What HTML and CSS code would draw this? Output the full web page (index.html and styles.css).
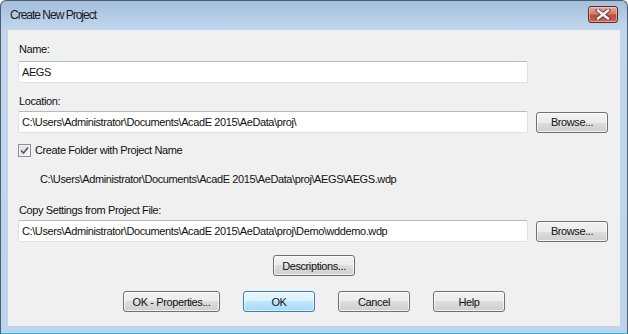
FILE: index.html
```html
<!DOCTYPE html>
<html lang="en">
<head>
    <meta charset="UTF-8">
    <title>Create New Project</title>
    <link rel="stylesheet" href="styles.css">
</head>
<body>

<div class="window">
    <div class="titlebar">
        <span class="title">Create New Project</span>
        <button class="close" type="button" aria-label="Close">
            <svg width="16" height="11" viewBox="0 0 16 11">
                <path d="M3 1.5 L13 9.5 M13 1.5 L3 9.5" stroke="#5b3b3b" stroke-width="4.2" stroke-linecap="square"/>
                <path d="M3 1.5 L13 9.5 M13 1.5 L3 9.5" stroke="#f4f4f4" stroke-width="2.4" stroke-linecap="square"/>
            </svg>
        </button>
    </div>

    <div class="client">
        <label class="label label-first" for="name">Name:</label>
        <div class="row">
            <input class="field" id="name" type="text" value="AEGS">
        </div>

        <label class="label" for="location">Location:</label>
        <div class="row">
            <input class="field" id="location" type="text" value="C:\Users\Administrator\Documents\AcadE 2015\AeData\proj\">
            <button class="btn" type="button">Browse...</button>
        </div>

        <label class="check">
            <span class="box">
                <svg width="9" height="9" viewBox="0 0 9 9">
                    <path d="M1 4.5 L3.5 7 L8 1.5" fill="none" stroke="#4a5878" stroke-width="1.6"/>
                </svg>
            </span>
            Create Folder with Project Name
        </label>
        <div class="path">C:\Users\Administrator\Documents\AcadE 2015\AeData\proj\AEGS\AEGS.wdp</div>

        <label class="label label-copy" for="settings">Copy Settings from Project File:</label>
        <div class="row">
            <input class="field" id="settings" type="text" value="C:\Users\Administrator\Documents\AcadE 2015\AeData\proj\Demo\wddemo.wdp">
            <button class="btn" type="button">Browse...</button>
        </div>

        <div class="center">
            <button class="btn btn-desc" type="button">Descriptions...</button>
        </div>

        <div class="actions">
            <button class="btn btn-wide" type="button">OK - Properties...</button>
            <button class="btn btn-default" type="button">OK</button>
            <button class="btn" type="button">Cancel</button>
            <button class="btn" type="button">Help</button>
        </div>
    </div>
</div>

</body>
</html>
```

FILE: styles.css
```css
body {
    margin: 0;
    font-family: "Liberation Sans", Arial, sans-serif;
    font-size: 11px;
    letter-spacing: -0.4px;
    color: #111;
    background: #fff;
}
.window {
    width: 628px;
    height: 334px;
    box-sizing: border-box;
    display: flex;
    flex-direction: column;
    padding: 0 7px 7px 7px;
    border: 1px solid #4f5d6c;
    border-bottom-color: #2cb6d6;
    border-radius: 6px 6px 0 0;
    background: linear-gradient(#a3bfdc, #c2d7ee 29px, #bdd4ec);
}
.titlebar {
    height: 29px;
    display: flex;
    align-items: center;
    justify-content: space-between;
}
.title {
    font-size: 12px;
    letter-spacing: -1px;
    color: #1b1b1b;
    padding: 0 0 2px 2px;
}
.close {
    width: 30px;
    height: 17px;
    padding: 0;
    margin: 0 2px 3px 0;
    border: 1px solid #5b2a2a;
    border-radius: 3px;
    background: linear-gradient(#e7aa9e, #d27c6c 45%, #c24a3a 55%, #c9654f);
    box-shadow: inset 0 0 0 1px rgba(255, 220, 210, 0.5);
    display: flex;
    align-items: center;
    justify-content: center;
}
.client {
    flex: 1;
    background: #f0f0f0;
    padding: 0 10px;
}
.label {
    display: block;
    line-height: 13px;
    margin: 12px 0 3px 1px;
}
.label-first {
    margin-top: 13px;
    margin-bottom: 5px;
}
.label-copy {
    margin-top: 18px;
}
.row {
    display: grid;
    grid-template-columns: 510px 72px;
    column-gap: 8px;
    align-items: center;
}
.field {
    height: 22px;
    box-sizing: border-box;
    margin: 0;
    padding: 0 3px;
    border: 1px solid #dde2e8;
    border-top-color: #b5bac2;
    border-radius: 2px;
    background: #fff;
    font: inherit;
    letter-spacing: inherit;
    color: #111;
}
.btn {
    height: 21px;
    width: 72px;
    box-sizing: border-box;
    padding: 0;
    border: 1px solid #707070;
    border-radius: 3px;
    background: linear-gradient(#f2f2f2, #ebebeb 50%, #dddddd 50%, #cfcfcf);
    box-shadow: inset 0 0 0 1px rgba(255, 255, 255, 0.7);
    font: inherit;
    letter-spacing: inherit;
    color: #111;
}
.btn-default {
    border-color: #3c7fb1;
    background: linear-gradient(#eaf6fd, #d9f0fc 50%, #bee6fd 50%, #a7d9f5);
    box-shadow: inset 0 0 0 1px rgba(255, 255, 255, 0.6);
}
.btn-wide {
    width: 97px;
}
.btn-desc {
    width: 82px;
}
.check {
    display: flex;
    align-items: center;
    gap: 4px;
    line-height: 13px;
    margin: 11px 0 0 0;
}
.box {
    width: 13px;
    height: 13px;
    box-sizing: border-box;
    border: 1px solid #8e8f8f;
    background: linear-gradient(135deg, #dcdcdc, #fafafa);
    box-shadow: inset 0 0 0 1px #f4f4f4;
    display: flex;
    align-items: center;
    justify-content: center;
}
.path {
    line-height: 13px;
    margin: 16px 0 0 22px;
}
.center {
    display: flex;
    justify-content: center;
    margin-top: 13px;
}
.actions {
    display: flex;
    justify-content: center;
    gap: 23px;
    margin-top: 15px;
}
```
